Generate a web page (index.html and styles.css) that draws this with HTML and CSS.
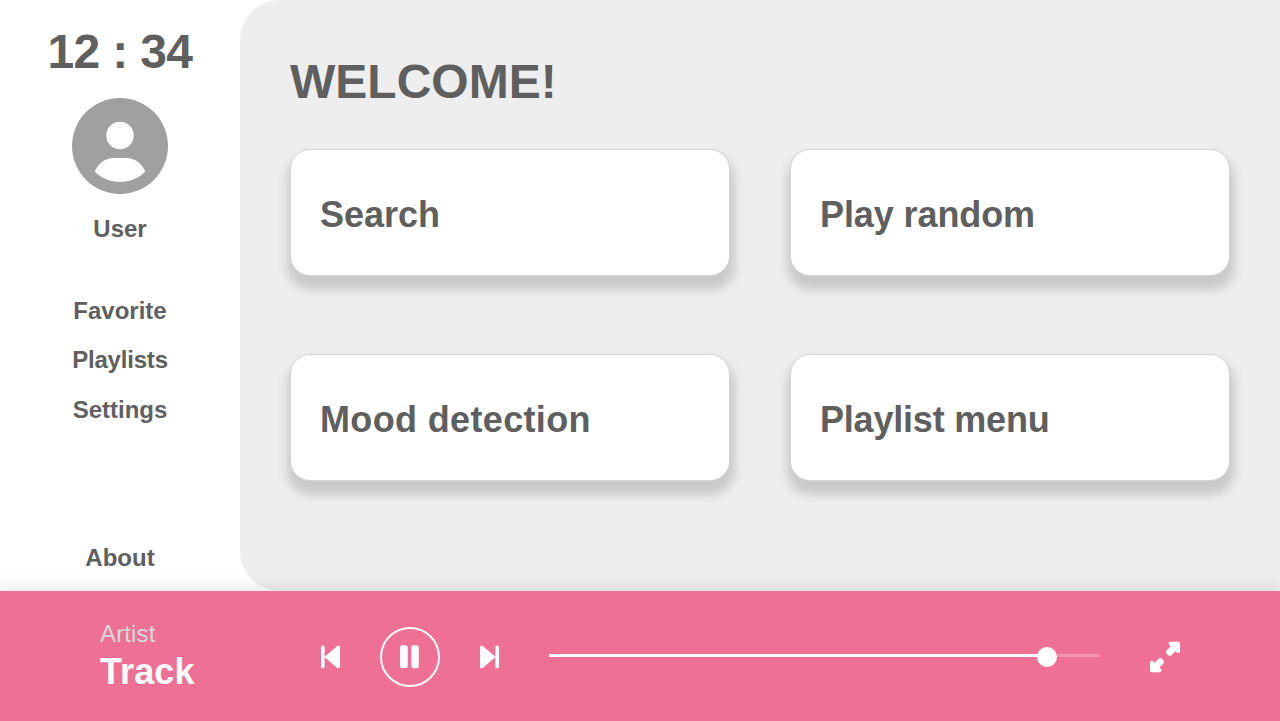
FILE: index.html
```html
<!DOCTYPE html>
<html lang="en">
<head>
<meta charset="utf-8">
<title>Music player</title>
<link rel="stylesheet" href="styles.css">
</head>
<body>
<div class="app">
  <div class="body">
    <aside class="sidebar">
      <div class="clock">12 : 34</div>
      <svg class="avatar" viewBox="0 0 96 96"><circle cx="48" cy="48" r="48" fill="#a0a0a0"/><circle cx="48" cy="37.500" r="13.700" fill="#fff"/><path fill="#fff" d="M22.700 73.500C26.500 65 33.500 60 41.500 60H54.500C62.500 60 69.500 65 73.300 73.500C66.500 80.300 57.800 84 48 84S29.500 80.300 22.700 73.500Z"/></svg>
      <div class="user">User</div>
      <nav class="nav">
        <a class="nav-item">Favorite</a>
        <a class="nav-item playlists">Playlists</a>
        <a class="nav-item">Settings</a>
      </nav>
      <a class="about">About</a>
    </aside>
    <main class="main">
      <h1 class="title">WELCOME!</h1>
      <div class="cards">
        <div class="card">Search</div>
        <div class="card random">Play random</div>
        <div class="card mood">Mood detection</div>
        <div class="card menu">Playlist menu</div>
      </div>
    </main>
  </div>
  <footer class="player">
    <div class="meta">
      <div class="artist">Artist</div>
      <div class="track">Track</div>
    </div>
    <div class="controls">
      <svg class="step" viewBox="0 0 20 24"><rect x="1" y=".500" width="3.600" height="22.800" rx="1.500"/><path d="M4.400 12 17 1.200Q20-.700 20 2.500V21.300Q20 24.500 17 22.700Z"/></svg>
      <svg class="pause" viewBox="0 0 60 60"><circle cx="30" cy="30" r="29" fill="none" stroke="#fff" stroke-width="2"/><rect x="20" y="18.300" width="7.700" height="23" rx="2.200"/><rect x="31.300" y="18.300" width="7.500" height="23" rx="2.200"/></svg>
      <svg class="step" viewBox="0 0 20 24"><path d="M15.600 12 3 1.200Q0-.700 0 2.500V21.300Q0 24.500 3 22.700Z"/><rect x="15.400" y=".500" width="3.600" height="22.800" rx="1.500"/></svg>
    </div>
    <div class="slider"><div class="fill"></div><div class="knob"></div></div>
    <svg class="expand" viewBox="0 0 30 30"><path id="arrow" d="M20.200-.200H28.500Q30-.200 30 1.500V9.800Q29.300 12 27 10.800L25.300 9.300 21.300 13.300Q19.700 14.700 18.200 13.300L16.500 11.600Q15.200 10 16.500 8.400L20.600 4.600 19.100 2.900Q17.600.700 20.200-.200Z"/><use href="#arrow" transform="rotate(180 15 15)"/></svg>
  </footer>
</div>
</body>
</html>
```
FILE: styles.css
```css
* { box-sizing: border-box; }
body {
  margin: 0;
  background: #fff;
  color: #5f5f5f;
  font-family: "Liberation Sans", Arial, sans-serif;
  font-weight: 700;
  white-space: nowrap;
}
.app { display: flex; flex-direction: column; width: 1280px; height: 721px; overflow: hidden; }
.body { display: flex; height: 591px; }
.sidebar { display: flex; flex-direction: column; align-items: center; width: 240px; padding-top: 24px; }
.clock { font-size: 48px; line-height: 56px; letter-spacing: -.5px; word-spacing: -.4px; }
.avatar { width: 96px; height: 96px; margin-top: 18px; }
.user { margin-top: 20px; font-size: 24px; line-height: 30px; }
.nav { display: flex; flex-direction: column; align-items: center; gap: 19px; margin-top: 52px; }
.nav-item, .about { font-size: 24px; line-height: 30px; }
.playlists { margin-bottom: 1px; letter-spacing: -.2px; }
.about { margin-top: 118px; }
.main { flex: 1; padding: 54px 50px 0; background: #eee; border-radius: 40px 0 0 40px; }
.title { margin: 0; font-size: 48px; line-height: 56px; }
.cards { display: grid; grid-template-columns: 440px 440px; gap: 78px 60px; margin-top: 39px; }
.card {
  display: flex;
  align-items: center;
  height: 127px;
  padding: 4px 29px 0;
  font-size: 36px;
  background: #fff;
  border: 1px solid #d4d4d4;
  border-radius: 20px;
  box-shadow: 1px 10px 10px 4px #cacaca;
}
.random { letter-spacing: -.1px; }
.mood { letter-spacing: .35px; }
.menu { letter-spacing: -.2px; }
.player {
  position: relative;
  display: flex;
  align-items: center;
  height: 130px;
  padding-left: 100px;
  background: #ef7095;
  box-shadow: 0 0 20px rgba(0, 0, 0, .13);
}
.meta { width: 220px; padding-top: 2px; }
.artist { color: #d9d9d9; font-size: 24px; font-weight: 400; line-height: 30px; letter-spacing: .15px; }
.track { color: #fff; font-size: 36px; line-height: 46px; letter-spacing: .1px; }
.controls { display: flex; align-items: center; justify-content: space-between; width: 180px; height: 60px; margin-top: 2px; fill: #fff; }
.step { width: 20px; height: 24px; overflow: visible; }
.pause { width: 60px; height: 60px; }
.slider { position: relative; width: 551px; height: 3px; margin: -1px 0 0 49px; background: rgba(255, 255, 255, .25); }
.fill { width: 498px; height: 3px; background: #fff; }
.knob { position: absolute; left: 488px; top: -7px; width: 20px; height: 20px; border-radius: 50%; background: #fff; }
.expand { width: 30px; height: 30px; margin-left: 50px; margin-top: 2px; fill: #fff; overflow: visible; }
```
